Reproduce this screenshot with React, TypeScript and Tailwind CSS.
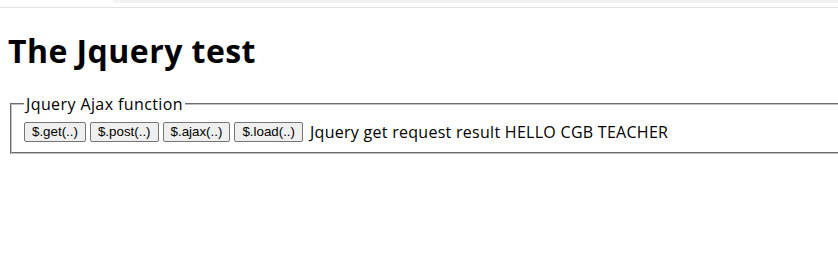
export default function App() {
  const buttons = ["$.get(..)", "$.post(..)", "$.ajax(..)", "$.load(..)"];
  return (
    <div className="w-[838px] h-[258px] overflow-hidden bg-white text-black font-['Open_Sans','Noto_Sans',sans-serif]">
      {/* browser chrome strip */}
      <div className="relative h-[8px] border-b border-[#e3e3e3] bg-white">
        <div className="absolute left-[113px] right-0 top-0 h-[3px] rounded-bl-[8px] bg-[#f1f3f4]" />
      </div>

      <div className="px-[8px]">
        <h1 className="mt-[24px] text-[32px] leading-[38px] font-bold tracking-[0.45px]">The Jquery test</h1>

        <fieldset className="mt-[24px] ml-[2px] w-[900px] border-2 [border-style:groove] border-[#c0c0c0] px-[12px] pt-[8px] pb-[10px]">
          <legend className="px-[2px] text-[16px] leading-[20px] tracking-[0.4px]">Jquery Ajax function</legend>
          <div className="flex items-center gap-[4px]">
            {buttons.map((b) => (
              <button
                key={b}
                className="h-[20px] rounded-[2px] border border-[#767676] bg-[#efefef] px-[7px] text-[13.33px] leading-[16px] font-['Liberation_Sans',Arial,sans-serif]"
              >
                {b}
              </button>
            ))}
            <span className="ml-[3px] text-[16px] leading-[20px] tracking-[0.28px]">Jquery get request result HELLO CGB TEACHER</span>
          </div>
        </fieldset>
      </div>
    </div>
  );
}
